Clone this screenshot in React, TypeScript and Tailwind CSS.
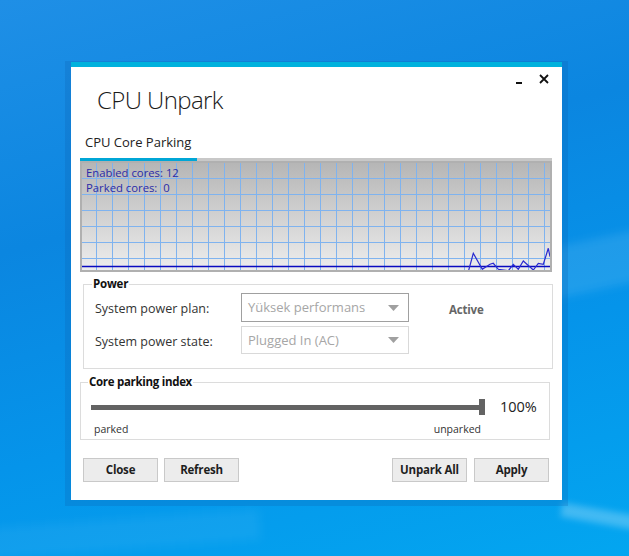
import React from 'react';

const FONT = '"Open Sans", "Noto Sans", "Liberation Sans", sans-serif';

// spike data near the right edge of the graph (coords inside the plot area)
const SPIKES: [number, number][] = [
  [386.3, 108.7], [391.3, 90.3], [400.3, 106.3], [408, 101.3], [411.3, 100.3],
  [416.3, 106.3], [426.3, 107.7], [431.3, 101.3], [436.3, 106.3], [441.3, 98],
  [451.3, 107], [456.3, 100.3], [461.3, 101.3], [466.3, 85.3], [468, 93.7],
];

function Graph() {
  const W = 468;
  const H = 107;
  const verticals = [];
  for (let x = 14; x < W; x += 16) verticals.push(x);
  const horizontals = [];
  for (let y = 15; y < H; y += 16) horizontals.push(y);

  return (
    <div className="relative ml-[9px] w-[472px] h-[111px] border-2 border-[#b0b0b0] bg-[linear-gradient(180deg,#b6b6b6_0%,#ededed_100%)] overflow-hidden">
      <svg className="absolute inset-0" width={W} height={H} viewBox={`0 0 ${W} ${H}`}>
        {verticals.map((x) => (
          <line key={'v' + x} x1={x + 0.5} y1={0} x2={x + 0.5} y2={H} stroke="#7fb3ef" strokeWidth={1} />
        ))}
        {horizontals.map((y) => (
          <line key={'h' + y} x1={0} y1={y + 0.5} x2={W} y2={y + 0.5} stroke="#7fb3ef" strokeWidth={1} />
        ))}
        <line x1={0} y1={103.5} x2={W} y2={103.5} stroke="#0a0ac0" strokeWidth={1.3} />
        <polyline
          points={SPIKES.map((p) => p.join(',')).join(' ')}
          fill="none"
          stroke="#2a2ad0"
          strokeWidth={1.2}
        />
      </svg>
      <div className="absolute left-[4px] top-[2px] text-[11.3px] leading-[15px] text-[#2a2aa8]">
        <div>Enabled cores: 12</div>
        <div>Parked cores:&nbsp; 0</div>
      </div>
    </div>
  );
}

function Dropdown({ value, focused, h }: { value: string; focused?: boolean; h: string }) {
  return (
    <div
      className={
        'w-[168px] flex items-center justify-between pl-[6px] pr-[9px] border bg-white ' +
        h +
        (focused ? ' border-[#a0a0a0]' : ' border-[#d9d9d9]')
      }
    >
      <span className="text-[13px] text-[#a6a6a6] leading-none">{value}</span>
      <svg width="11" height="6" viewBox="0 0 11 6">
        <path d="M0 0 H11 L5.5 6 Z" fill="#a0a0a0" />
      </svg>
    </div>
  );
}

function Button({ label, className }: { label: string; className?: string }) {
  return (
    <button
      className={
        'w-[75px] h-[24px] bg-[#ececec] border border-[#c9c9c9] text-[11.5px] font-bold tracking-[-0.2px] text-[#1e1e1e] ' +
        (className || '')
      }
    >
      {label}
    </button>
  );
}

export default function App() {
  return (
    <div
      className="relative w-[629px] h-[556px] overflow-hidden bg-[linear-gradient(165deg,#1f8fe6_0%,#0b86e0_35%,#0594ea_65%,#03a6f0_100%)]"
      style={{ fontFamily: FONT }}
    >
      {/* wallpaper light beams */}
      <div className="absolute left-[470px] top-[-60px] w-[300px] h-[40px] bg-white/10 rotate-[18deg] blur-[3px]" />
      <div className="absolute left-[540px] top-[230px] w-[200px] h-[50px] bg-white/10 -rotate-[12deg] blur-[4px]" />
      <div className="absolute left-[560px] top-[520px] w-[200px] h-[14px] bg-white/25 rotate-[10deg] blur-[3px]" />
      <div className="absolute left-[-40px] top-[520px] w-[300px] h-[30px] bg-white/5 -rotate-[4deg] blur-[4px]" />

      <div className="relative pt-[61px] pl-[65px]">
        {/* window shadow frame */}
        <div className="w-[503px] h-[445px] bg-[#0a5fb0]/25 pt-[1px] px-[6px] pb-[6px]">
          <div className="h-[5px] bg-[#00b2dd]" />
          <div className="h-[433px] bg-white flex flex-col">
            {/* header */}
            <div className="relative h-[49px] pt-[17px] pl-[26px]">
              <div className="text-[24px] leading-[32px] font-light tracking-[-0.6px] text-[#1a1a1a]">CPU Unpark</div>
              <div className="absolute right-[13px] top-[7px] flex items-end gap-[17px]">
                <svg width="6" height="9" viewBox="0 0 6 9">
                  <rect x="0" y="7" width="6" height="2" fill="#111" />
                </svg>
                <svg width="10" height="10" viewBox="0 0 10 10">
                  <path d="M1 1 L9 9 M9 1 L1 9" stroke="#111" strokeWidth="1.8" />
                </svg>
              </div>
            </div>

            {/* tab */}
            <div className="pl-[14px] mt-[16px] text-[13px] leading-[20px] text-[#222]">CPU Core Parking</div>
            <div className="ml-[9px] mt-[6px] w-[472px] h-[3px] flex">
              <div className="w-[117px] bg-[#00a6d6]" />
              <div className="flex-1 bg-[#c8c8c8]" />
            </div>
            <Graph />

            {/* power group */}
            <div className="relative ml-[12px] mt-[12px] w-[470px] h-[85px] border border-[#dcdcdc]">
              <div className="absolute left-[8px] -top-[9px] bg-white px-[1px] text-[11.5px] leading-[16px] font-bold tracking-[-0.2px] text-[#111]">
                Power
              </div>
              <div className="flex items-center mt-[8px]">
                <div className="w-[157px] pl-[11px] pt-[4px] text-[12.5px] text-[#333]">System power plan:</div>
                <Dropdown value="Yüksek performans" focused h="h-[29px]" />
                <div className="ml-[40px] pt-[5px] text-[11.5px] font-bold tracking-[-0.2px] text-[#666]">Active</div>
              </div>
              <div className="flex items-center mt-[4px]">
                <div className="w-[157px] pl-[11px] pt-[4px] text-[12.5px] text-[#333]">System power state:</div>
                <Dropdown value="Plugged In (AC)" h="h-[28px]" />
              </div>
            </div>

            {/* core parking index group */}
            <div className="relative ml-[9px] mt-[13px] w-[470px] h-[58px] border border-[#dcdcdc]">
              <div className="absolute left-[7px] -top-[9px] bg-white px-[1px] text-[11.5px] leading-[16px] font-bold tracking-[-0.3px] text-[#111]">
                Core parking index
              </div>
              <div className="flex items-center pl-[10px] mt-[16px] h-[16px]">
                <div className="relative w-[394px] h-[16px] flex items-center">
                  <div className="w-full h-[5px] bg-[#636363]" />
                  <div className="absolute right-0 top-0 w-[6px] h-[16px] bg-[#636363]" />
                </div>
                <div className="ml-[15px] text-[14.5px] leading-none text-[#222]">100%</div>
              </div>
              <div className="flex w-[400px] justify-between pl-[13px] mt-[7px] text-[10.5px] leading-[14px] text-[#333]">
                <span>parked</span>
                <span>unparked</span>
              </div>
            </div>

            {/* buttons */}
            <div className="flex mt-[18px] pl-[12px]">
              <Button label="Close" />
              <Button label="Refresh" className="ml-[6px]" />
              <Button label="Unpark All" className="ml-[153px]" />
              <Button label="Apply" className="ml-[7px]" />
            </div>
          </div>
        </div>
      </div>
    </div>
  );
}
